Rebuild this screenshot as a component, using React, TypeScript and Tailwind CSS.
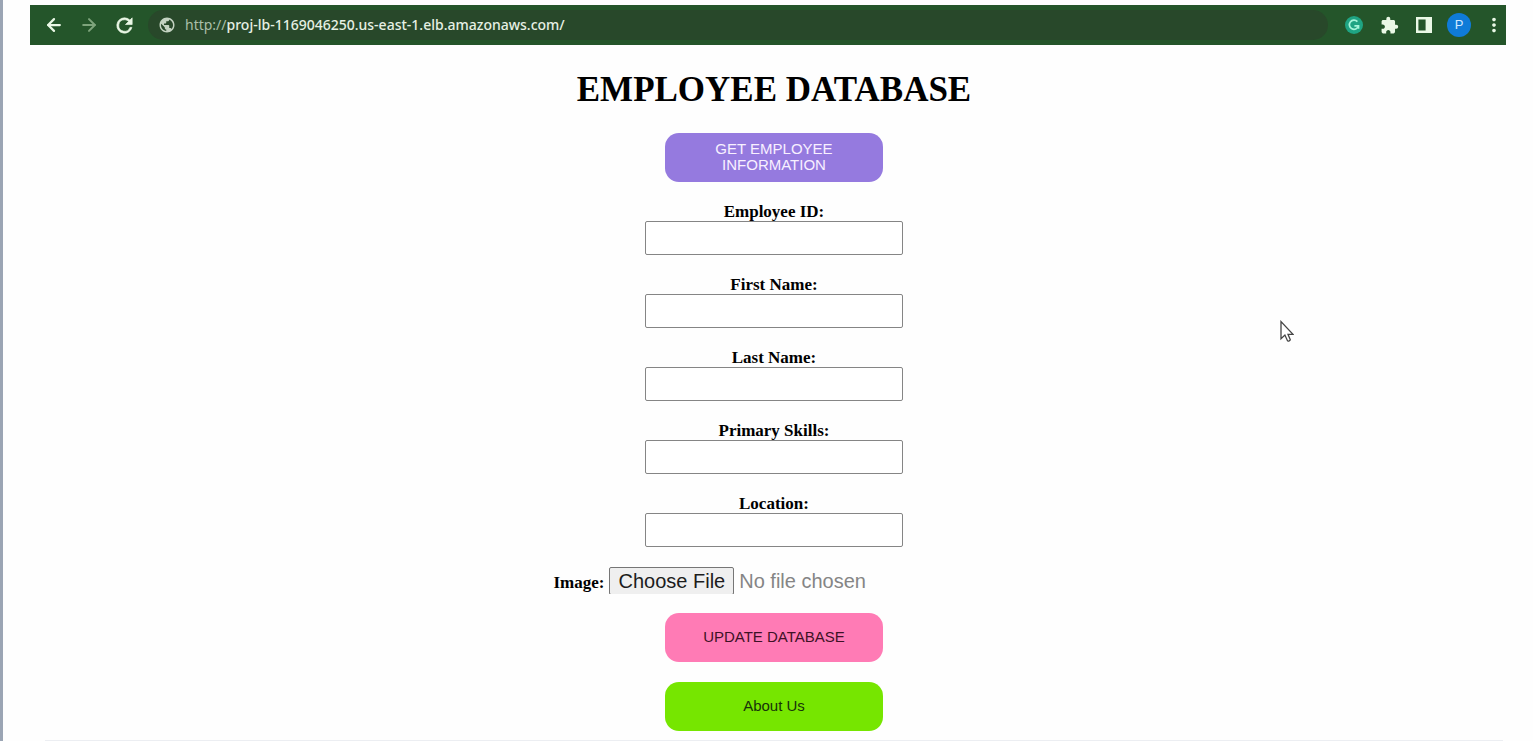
import { ArrowLeft, ArrowRight } from "lucide-react";
import { MdExtension, MdMoreVert, MdPublic } from "react-icons/md";

const fields = [
  { id: "emp_id", label: "Employee ID:" },
  { id: "first_name", label: "First Name:" },
  { id: "last_name", label: "Last Name:" },
  { id: "pri_skill", label: "Primary Skills:" },
  { id: "location", label: "Location:" },
];

const pill =
  "flex h-[49px] w-[218px] items-center justify-center rounded-[14px] px-9 pb-0.5 text-center font-['Liberation_Sans',sans-serif] text-[15px] leading-4";

const barButton = "flex size-6 items-center justify-center";

function BrowserBar() {
  return (
    <header className="mr-[27px] ml-[27px] flex h-10 items-center bg-[#24552a] pl-3 text-[#eaf8e6]">
      <nav className="flex items-center gap-[11px]">
        <button type="button" aria-label="Back" className={barButton}>
          <ArrowLeft className="size-5" strokeWidth={2.7} />
        </button>
        <button type="button" aria-label="Forward" className={`${barButton} text-[#7ea47c]`}>
          <ArrowRight className="size-5" strokeWidth={2.4} />
        </button>
        <button type="button" aria-label="Reload" className={barButton}>
          <svg viewBox="0 0 24 24" className="size-[23px]" fill="currentColor" stroke="currentColor" strokeWidth="0.7">
            <path d="M17.65 6.35A7.96 7.96 0 0 0 12 4a8 8 0 1 0 7.73 10h-2.08A6 6 0 1 1 12 6c1.66 0 3.14.69 4.22 1.78L13 11h7V4z" />
          </svg>
        </button>
      </nav>
      <div className="ml-3 flex h-[30px] flex-1 items-center rounded-full bg-[#28482a] pl-[10px] font-['Noto_Sans',sans-serif] text-[14px] leading-5">
        <MdPublic className="size-[18px] text-[#c3d2c1]" />
        <label htmlFor="address" className="ml-[9px] text-[#a9bfa8]">
          http://
        </label>
        <input
          id="address"
          type="text"
          defaultValue="proj-lb-1169046250.us-east-1.elb.amazonaws.com/"
          className="min-w-0 flex-1 bg-transparent font-medium text-[#e6f0e4] outline-none"
        />
      </div>
      <div className="ml-[14px] flex items-center gap-[11px]">
        <button type="button" aria-label="Grammar checker" className={barButton}>
          <svg viewBox="0 0 18 18" className="size-[18px]" fill="none" stroke="#a5f5d9" strokeWidth="1.7">
            <circle cx="9" cy="9" r="9" fill="#1fa483" stroke="none" />
            <path d="M12.4 5.6A4.6 4.6 0 1 0 13.4 10" />
            <path d="M9.4 9.8h4.1v3" />
          </svg>
        </button>
        <button type="button" aria-label="Extensions" className={barButton}>
          <MdExtension className="size-[19px]" />
        </button>
        <button type="button" aria-label="Side panel" className={barButton}>
          <svg viewBox="0 0 16 16" className="size-4">
            <path fill="currentColor" fillRule="evenodd" d="M0 0h16v16H0zM2.4 2.6v10.8h7.2V2.6z" />
          </svg>
        </button>
        <button
          type="button"
          aria-label="Profile"
          className={`${barButton} rounded-full bg-[#0f7bd8] font-['Liberation_Sans',sans-serif] text-[13px] leading-4 text-[#cfe8ff]`}
        >
          P
        </button>
        <button type="button" aria-label="Menu" className={barButton}>
          <MdMoreVert className="size-[22px]" />
        </button>
      </div>
    </header>
  );
}

function Cursor() {
  return (
    <svg
      viewBox="0 0 14 22"
      className="pointer-events-none absolute top-[320px] left-[1277px] h-[22px] w-[14px]"
      fill="#fff"
      stroke="#444"
      strokeWidth="1.3"
      aria-hidden="true"
    >
      <path d="M1 1.6v17.2l3.9-3.7 2.6 5.6c.5.9 3.2-.2 2.7-1.3L8 14.3h5z" />
    </svg>
  );
}

export default function App() {
  return (
    <div className="relative min-h-screen border-l-[3px] border-[#9ba5b4] bg-[#fefefe] pt-[5px] text-black">
      <BrowserBar />
      <main className="mr-[30px] ml-[42px] flex flex-col items-center border-b border-[#eceef2] pt-[25px] pb-[9px] font-['Liberation_Serif',serif]">
        <h1 className="text-[35px] leading-10 font-bold">EMPLOYEE DATABASE</h1>
        <a href="#employee" className={`${pill} mt-[23px] bg-[#957adf] text-[#f8f0ff]`}>
          GET EMPLOYEE INFORMATION
        </a>
        <form className="mt-5 flex flex-col items-center" onSubmit={(e) => e.preventDefault()}>
          <div className="flex flex-col gap-5">
            {fields.map((f) => (
              <div key={f.id} className="flex flex-col items-center">
                <label htmlFor={f.id} className="text-[17px] leading-[19px] font-bold">
                  {f.label}
                </label>
                <input
                  id={f.id}
                  type="text"
                  className="h-[34px] w-[258px] rounded-[2px] border border-[#858585] bg-white px-2"
                />
              </div>
            ))}
          </div>
          <div className="mt-5 flex items-end gap-[5px]">
            <label htmlFor="image_file" className="text-[17px] leading-[23px] font-bold">
              Image:
            </label>
            <input
              id="image_file"
              type="file"
              className="h-[27px] w-[385px] overflow-hidden font-['Liberation_Sans',sans-serif] text-[20px] leading-6 text-[#858585] file:mr-[5px] file:h-[28px] file:rounded-[2px] file:border file:border-solid file:border-[#767676] file:bg-[#efefef] file:px-2 file:text-[#1c1c1c]"
            />
          </div>
          <button type="submit" className={`${pill} mt-[19px] bg-[#ff7bb5] text-[#3d1226]`}>
            UPDATE DATABASE
          </button>
        </form>
        <a href="#about" className={`${pill} mt-5 bg-[#76e600] text-[#17330a]`}>
          About Us
        </a>
      </main>
      <Cursor />
    </div>
  );
}
